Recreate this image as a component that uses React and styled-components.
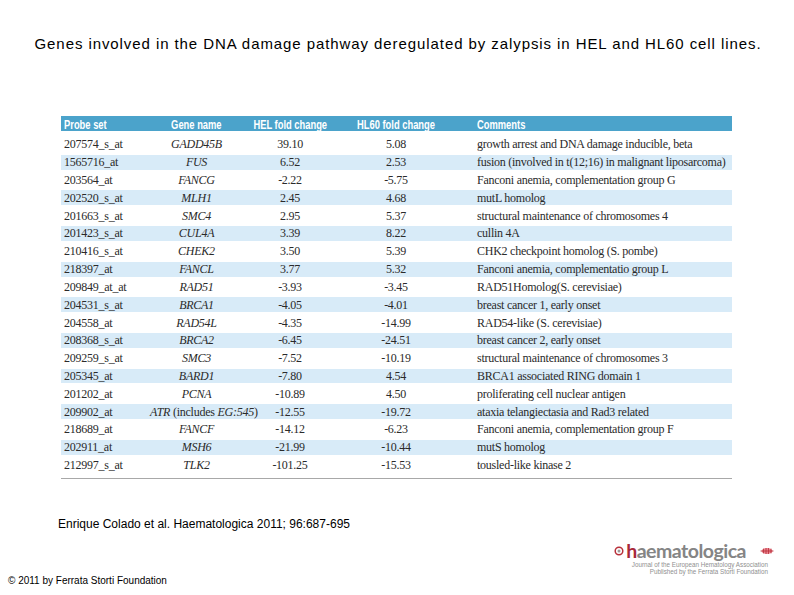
import React from "react";
import styled, { createGlobalStyle } from "styled-components";

const Global = createGlobalStyle`
  html, body { margin: 0; padding: 0; background: #fff; }
  body { font-family: "Liberation Sans", Arial, sans-serif; }
`;

const Page = styled.div`
  width: 794px;
  height: 595px;
  display: flex;
  flex-direction: column;
  overflow: hidden;
  background: #fff;
`;

const Title = styled.h1`
  margin: 35px 0 0 0;
  font-family: "Liberation Sans", Arial, sans-serif;
  font-weight: normal;
  font-size: 15px;
  letter-spacing: 0.92px;
  line-height: 18px;
  color: #000;
  text-align: center;
  padding-left: 2px;
`;

const Table = styled.div`
  margin: 63px 0 0 61px;
  width: 671px;
  display: flex;
  flex-direction: column;
  border-bottom: 1px solid #a8a8a8;
  padding-bottom: 4px;
`;

const cols = "89px 93px 94px 118px 277px";

const Header = styled.div`
  display: grid;
  grid-template-columns: ${cols};
  height: 15px;
  align-items: center;
  background: #4ba3cb;
  margin-bottom: 5px;
`;

const HeadCell = styled.div`
  text-align: ${(p) => (p.$center ? "center" : "left")};
  padding-left: ${(p) => p.$pad || 0}px;
  white-space: nowrap;
  line-height: 15px;
`;

const HeadText = styled.span`
  display: inline-block;
  font-family: "Liberation Sans", Arial, sans-serif;
  font-weight: bold;
  font-size: 12px;
  color: #fff;
  transform: scaleX(0.78);
  transform-origin: ${(p) => (p.$center ? "center" : "left")};
`;

const Row = styled.div`
  display: grid;
  grid-template-columns: ${cols};
  height: 17.82px;
  align-items: center;
  background: ${(p) => (p.$band ? "#d8ebf8" : "transparent")};
  box-shadow: inset 0 1px 0 #fff, inset 0 -2px 0 #fff;
`;

const Cell = styled.div`
  font-family: "Liberation Serif", "Times New Roman", serif;
  font-size: 12px;
  letter-spacing: -0.25px;
  color: #2a2a2a;
  line-height: 17px;
  white-space: nowrap;
  text-align: ${(p) => (p.$center ? "center" : "left")};
  padding-left: ${(p) => p.$pad || 0}px;
  font-style: ${(p) => (p.$italic ? "italic" : "normal")};
`;

const Ital = styled.i`
  font-style: italic;
`;

const Citation = styled.div`
  margin: 38px 0 0 58px;
  font-family: "Liberation Sans", Arial, sans-serif;
  font-size: 12px;
  line-height: 14px;
  color: #000;
`;

const Footer = styled.div`
  margin-top: auto;
  display: flex;
  justify-content: space-between;
  align-items: flex-end;
  padding: 0 20px 9px 8px;
`;

const Copyright = styled.div`
  font-family: "Liberation Sans", Arial, sans-serif;
  font-size: 10px;
  line-height: 11px;
  color: #000;
`;

const Logo = styled.div`
  display: flex;
  flex-direction: column;
  align-items: flex-end;
  margin-bottom: 11px;
`;

const LogoTop = styled.div`
  display: flex;
  align-items: center;
  gap: 2px;
  height: 18px;
  margin-bottom: 2px;
`;

const LogoWord = styled.div`
  font-family: Lato, "Open Sans", sans-serif;
  font-weight: bold;
  font-size: 19.5px;
  line-height: 18px;
  color: #858585;
  letter-spacing: -0.5px;
  margin-right: 12px;
`;

const LogoH = styled.span`
  color: #a8283a;
`;

const LogoSub = styled.div`
  font-family: "Liberation Sans", Arial, sans-serif;
  font-size: 6.3px;
  line-height: 6.5px;
  color: #8f8f8f;
  text-align: right;
  margin-right: 6px;
`;

const rows = [
  ["207574_s_at", "GADD45B", "39.10", "5.08", "growth arrest and DNA damage inducible, beta"],
  ["1565716_at", "FUS", "6.52", "2.53", "fusion (involved in t(12;16) in malignant liposarcoma)"],
  ["203564_at", "FANCG", "-2.22", "-5.75", "Fanconi anemia, complementation group G"],
  ["202520_s_at", "MLH1", "2.45", "4.68", "mutL homolog"],
  ["201663_s_at", "SMC4", "2.95", "5.37", "structural maintenance of chromosomes 4"],
  ["201423_s_at", "CUL4A", "3.39", "8.22", "cullin 4A"],
  ["210416_s_at", "CHEK2", "3.50", "5.39", "CHK2 checkpoint homolog (S. pombe)"],
  ["218397_at", "FANCL", "3.77", "5.32", "Fanconi anemia, complementatio group L"],
  ["209849_at_at", "RAD51", "-3.93", "-3.45", "RAD51Homolog(S. cerevisiae)"],
  ["204531_s_at", "BRCA1", "-4.05", "-4.01", "breast cancer 1, early onset"],
  ["204558_at", "RAD54L", "-4.35", "-14.99", "RAD54-like (S. cerevisiae)"],
  ["208368_s_at", "BRCA2", "-6.45", "-24.51", "breast cancer 2, early onset"],
  ["209259_s_at", "SMC3", "-7.52", "-10.19", "structural maintenance of chromosomes 3"],
  ["205345_at", "BARD1", "-7.80", "4.54", "BRCA1 associated RING domain 1"],
  ["201202_at", "PCNA", "-10.89", "4.50", "proliferating cell nuclear antigen"],
  ["209902_at", "ATR", "-12.55", "-19.72", "ataxia telangiectasia and Rad3 related"],
  ["218689_at", "FANCF", "-14.12", "-6.23", "Fanconi anemia, complementation group F"],
  ["202911_at", "MSH6", "-21.99", "-10.44", "mutS homolog"],
  ["212997_s_at", "TLK2", "-101.25", "-15.53", "tousled-like kinase 2"],
];

const headers = [
  ["Probe set", false, 3],
  ["Gene name", true, 0],
  ["HEL fold change", true, 0],
  ["HL60 fold change", true, 0],
  ["Comments", false, 22],
];

function Gene({ name }) {
  if (name === "ATR") {
    return (
      <Cell $center>
        <Ital>ATR</Ital> (includes <Ital>EG:545</Ital>)
      </Cell>
    );
  }
  return (
    <Cell $center $italic>
      {name}
    </Cell>
  );
}

function SwirlIcon() {
  return (
    <svg width="10" height="10" viewBox="0 0 10 10">
      <circle cx="5" cy="5" r="3.8" fill="none" stroke="#b8303a" strokeWidth="1.5" />
      <circle cx="5" cy="5" r="1.5" fill="#9a9a9a" />
    </svg>
  );
}

function DnaIcon() {
  return (
    <svg width="14" height="8" viewBox="0 0 14 8">
      <ellipse cx="7" cy="4" rx="5.5" ry="3" fill="#e9808c" />
      <path d="M0.5 4 H13.5 M3.5 1.6 V6.4 M6 1 V7 M8.5 1 V7 M11 1.6 V6.4" stroke="#b8303a" strokeWidth="0.8" />
    </svg>
  );
}

export default function App() {
  return (
    <Page>
      <Global />
      <Title>Genes involved in the DNA damage pathway deregulated by zalypsis in HEL and HL60 cell lines.</Title>
      <Table>
        <Header>
          {headers.map(([t, c, p]) => (
            <HeadCell key={t} $center={c} $pad={p}>
              <HeadText $center={c}>{t}</HeadText>
            </HeadCell>
          ))}
        </Header>
        {rows.map((r, i) => (
          <Row key={r[0]} $band={i % 2 === 1}>
            <Cell $pad={3}>{r[0]}</Cell>
            <Gene name={r[1]} />
            <Cell $center>{r[2]}</Cell>
            <Cell $center>{r[3]}</Cell>
            <Cell $pad={22}>{r[4]}</Cell>
          </Row>
        ))}
      </Table>
      <Citation>Enrique Colado et al. Haematologica 2011; 96:687-695</Citation>
      <Footer>
        <Copyright>© 2011 by Ferrata Storti Foundation</Copyright>
        <Logo>
          <LogoTop>
            <SwirlIcon />
            <LogoWord>
              <LogoH>h</LogoH>aematologica
            </LogoWord>
            <DnaIcon />
          </LogoTop>
          <LogoSub>Journal of the European Hematology Association</LogoSub>
          <LogoSub>Published by the Ferrata Storti Foundation</LogoSub>
        </Logo>
      </Footer>
    </Page>
  );
}
